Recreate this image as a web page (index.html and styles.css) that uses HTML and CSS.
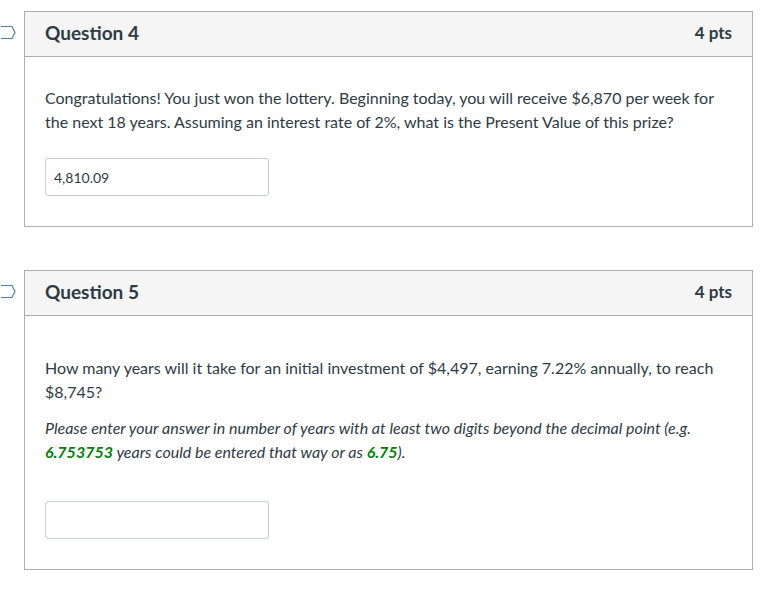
FILE: index.html
```html
<!DOCTYPE html>
<html lang="en">
<head>
  <meta charset="UTF-8">
  <title>Quiz</title>
  <link rel="stylesheet" href="styles.css">
</head>
<body>
  <div class="quiz">
    <div class="question">
      <svg class="flag" width="16" height="16" viewBox="0 0 16 16">
        <path d="M-2 1.5 H11 L14 7.5 L11 13.5 H-2" fill="none" stroke="#4f7fa6" stroke-width="1.2"/>
      </svg>
      <div class="question-header">
        <span class="question-name">Question 4</span>
        <span class="question-points">4 pts</span>
      </div>
      <div class="question-body">
        <p class="question-text">Congratulations! You just won the lottery. Beginning today, you will receive $6,870 per week for the next 18 years. Assuming an interest rate of 2%, what is the Present Value of this prize?</p>
        <input class="answer" type="text" value="4,810.09">
      </div>
    </div>

    <div class="question">
      <svg class="flag" width="16" height="16" viewBox="0 0 16 16">
        <path d="M-2 1.5 H11 L14 7.5 L11 13.5 H-2" fill="none" stroke="#4f7fa6" stroke-width="1.2"/>
      </svg>
      <div class="question-header">
        <span class="question-name">Question 5</span>
        <span class="question-points">4 pts</span>
      </div>
      <div class="question-body q5">
        <p class="question-text first">How many years will it take for an initial investment of $4,497, earning 7.22% annually, to reach $8,745?</p>
        <p class="question-text hint"><em>Please enter your answer in number of years with at least two digits beyond the decimal point (e.g. <strong class="green">6.753753</strong> years could be entered that way or as <strong class="green">6.75</strong>).</em></p>
        <input class="answer" type="text" value="">
      </div>
    </div>
  </div>
</body>
</html>
```

FILE: styles.css
```css
body { margin: 0; padding: 0; background-color: #fff; font-family: Lato, "Open Sans", sans-serif; color: #2d3b45; }
.quiz { padding: 11px 25px 0 24px; }
.question { position: relative; border: 1px solid #aaaeb1; margin-bottom: 43px; }
.flag { position: absolute; left: -24px; top: 13px; }
.question-header {
  display: flex; justify-content: space-between; align-items: center;
  height: 44px; padding: 0 20px; background-color: #f5f5f5; border-bottom: 1px solid #aaaeb1;
}
.question-name { font-size: 19px; font-weight: bold; line-height: 22px; margin-top: -3px; }
.question-points { font-size: 17px; font-weight: bold; line-height: 22px; margin-top: -3px; color: #2d3b45; }
.question-body { padding: 29px 20px 30px 20px; }
.question-body.q5 { padding-top: 40px; }
.question-text { margin: 0 0 24px 0; font-size: 16px; line-height: 24px; }
.question-text.first { margin-bottom: 12px; }
.hint { margin-bottom: 37px; }
.green { color: #00800a; font-weight: bold; }
.answer {
  display: block; box-sizing: border-box; width: 224px; height: 38px; margin: 0;
  padding: 0 8px; border: 1px solid #c7cdd1; border-radius: 3px;
  font-family: Lato, sans-serif; font-size: 14px; color: #2d3b45;
}
```
